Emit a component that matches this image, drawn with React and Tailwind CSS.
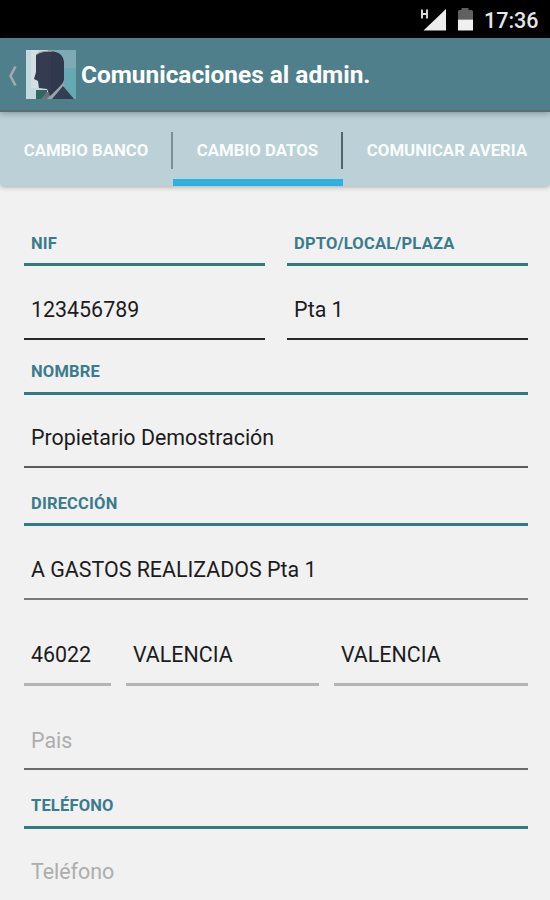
import React from 'react';

const TABS = ['CAMBIO BANCO', 'CAMBIO DATOS', 'COMUNICAR AVERIA'];

function StatusBar() {
  return (
    <div className="h-[38px] shrink-0 bg-black flex items-center justify-end pr-3 text-[#e6e6e6]">
      <svg width="60" height="38" viewBox="0 0 60 38" className="shrink-0">
        {/* signal */}
        <path d="M3.500 30.500 26 9v21.500z" fill="#ececec" />
        <path d="M2 9.500v9M7 9.500v9M2 14h5" stroke="#dcdcdc" strokeWidth="1.900" fill="none" />
        {/* battery */}
        <path d="M38 19.500V11.500q0-1.500 1.500-1.500h2V8h7v2h3q1.500 0 1.500 1.500v8z" fill="#606060" />
        <path d="M38 19.500h15v11h-15z" fill="#f0f0f0" />
      </svg>
      <span className="w-[54px] ml-1 mt-1 text-[21.500px] leading-[28px] font-medium whitespace-nowrap">17:36</span>
    </div>
  );
}

function Avatar() {
  return (
    <svg width="50" height="49" viewBox="0 0 50 49" className="shrink-0">
      <rect width="50" height="49" fill="#7fa9b4" />
      <path d="M0 0h22v49H0z" fill="#c3d9df" />
      <path d="M5 0h7v38H5z" fill="#d3dfe3" />
      <path d="M38 18h12v31H38z" fill="#65a9b3" />
      <path d="M22 34h16v15H22z" fill="#7b9fac" />
      <path d="M10 40h11v9H10z" fill="#33665f" />
      <path d="M15 49l6-7 5 2-4 5z" fill="#6f6f7c" />
      <path d="M21 49 36 33l3 3-13 13z" fill="#98a3ae" />
      <path d="M26 49 37 36l11 13z" fill="#343e52" />
      <path
        d="M10 5C13 2 18 1.500 24 1.500c10 0 14 5 14 13V28c0 4-3 7-6 10l-8 8-3-7-8-1-1-7-4-2 2-7z"
        fill="#353c50"
      />
      <path d="M25 1.500c9 0 13 5 13 13V28c0 4-3 7-6 10l-7 7z" fill="#2f384c" />
      <path d="M10 5C14 1.500 19 1 26 1.200" stroke="#ad9b91" strokeWidth="1" fill="none" />
    </svg>
  );
}

function Header() {
  return (
    <header className="relative z-10 h-[74px] shrink-0 flex items-center bg-[#507f8c] border-b-2 border-[#626a70] pl-2 shadow-[0_2px_6px_rgba(60,80,90,0.4)]">
      <svg width="10" height="22" viewBox="0 0 10 22" className="shrink-0 mr-2 mt-1">
        <path d="M7.500 1.500 2.500 11l5 9.500" fill="none" stroke="#a3a9aa" strokeWidth="2.600" />
      </svg>
      <Avatar />
      <h1 className="ml-[5px] mt-[2px] text-[24.400px] leading-[30px] font-bold text-white whitespace-nowrap">
        Comunicaciones al admin.
      </h1>
    </header>
  );
}

function Tabs() {
  return (
    <nav className="h-[74px] shrink-0 grid grid-cols-[173px_170px_207px] bg-[#bcd0d7] rounded-b-[4px] shadow-[0_1px_5px_rgba(60,60,60,0.4)]">
      {TABS.map((tab, i) => (
        <div key={tab} className={`flex flex-col justify-end ${i === 1 ? 'border-b-[7px] border-[#2bb2e1]' : 'pb-[7px]'}`}>
          <div
            className={`h-[37px] mb-[10px] pl-px flex items-center justify-center text-[16.800px] font-bold text-[#f8fcfd] whitespace-nowrap ${
              i === 0 ? 'border-r-2 border-[#7d9098]' : i === 1 ? 'border-r-2 border-[#55646b]' : ''
            }`}
          >
            {tab}
          </div>
        </div>
      ))}
    </nav>
  );
}

function Label({ children, className }) {
  return (
    <div className={`flex items-end border-b-[3px] border-[#2f7a85] pl-[7px] ${className}`}>
      <span className="text-[16.500px] leading-[24px] tracking-[0.18px] font-bold text-[#3a7c8c] whitespace-nowrap">
        {children}
      </span>
    </div>
  );
}

function Field({ value, placeholder, className }) {
  return (
    <div className={`flex items-end pl-[7px] ${className}`}>
      <span className={`text-[21.400px] leading-[28px] whitespace-nowrap ${value ? 'text-[#1c1c1c]' : 'text-[#adadad]'}`}>
        {value || placeholder}
      </span>
    </div>
  );
}

export default function App() {
  return (
    <div className="w-[550px] h-[900px] overflow-hidden flex flex-col bg-[#f1f1f1] font-['Roboto',sans-serif]">
      <StatusBar />
      <Header />
      <Tabs />

      <main className="flex flex-col pl-6 pr-[22px]">
        <div className="grid grid-cols-2 gap-x-[22px]">
          <Label className="h-[80px] pb-[7px]">NIF</Label>
          <Label className="h-[80px] pb-[7px]">DPTO/LOCAL/PLAZA</Label>
          <Field value="123456789" className="h-[74px] pb-[14px] border-b-2 border-[#292929]" />
          <Field value="Pta 1" className="h-[74px] pb-[14px] border-b-2 border-[#292929]" />
        </div>

        <Label className="h-[55px] pb-[8px]">NOMBRE</Label>
        <Field value="Propietario Demostración" className="h-[73px] pb-[14px] border-b-2 border-[#5c5c5c]" />

        <Label className="h-[58px] pb-[7px]">DIRECCIÓN</Label>
        <Field value="A GASTOS REALIZADOS Pta 1" className="h-[74px] pb-[14px] border-b-2 border-[#7b7b7b]" />

        {/* postcode / city / province */}
        <div className="grid grid-cols-[87px_193px_194px] gap-x-[15px]">
          <Field value="46022" className="h-[86px] pb-[14px] border-b-[3px] border-[#b4b4b4]" />
          <Field value="VALENCIA" className="h-[86px] pb-[14px] border-b-[3px] border-[#b4b4b4]" />
          <Field value="VALENCIA" className="h-[86px] pb-[14px] border-b-[3px] border-[#b4b4b4]" />
        </div>
        <Field placeholder="Pais" className="h-[84px] pb-[13px] border-b-2 border-[#6a6a6a]" />

        <Label className="h-[59px] pb-[8px]">TELÉFONO</Label>
        <Field placeholder="Teléfono" className="h-[71px] pb-[14px]" />
      </main>
    </div>
  );
}
